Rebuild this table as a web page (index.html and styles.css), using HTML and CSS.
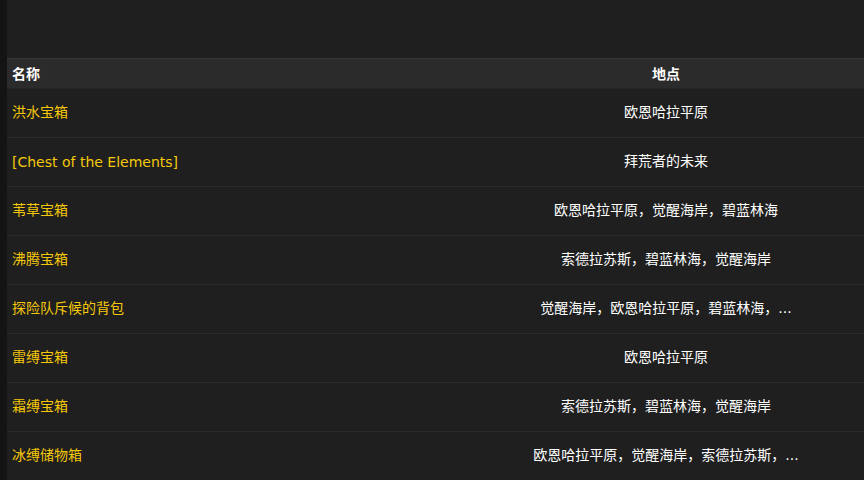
FILE: index.html
```html
<!DOCTYPE html>
<html lang="zh">
<head>
<meta charset="utf-8">
<link rel="stylesheet" href="styles.css">
</head>
<body>
<div class="page">
  <div class="rail"></div>
  <main class="main">
    <div class="top"></div>
    <table class="list">
      <thead>
        <tr><th class="name">名称</th><th class="loc">地点</th></tr>
      </thead>
      <tbody>
        <tr><td class="name">洪水宝箱</td><td class="loc">欧恩哈拉平原</td></tr>
        <tr><td class="name latin">[Chest of the Elements]</td><td class="loc">拜荒者的未来</td></tr>
        <tr><td class="name">苇草宝箱</td><td class="loc">欧恩哈拉平原，觉醒海岸，碧蓝林海</td></tr>
        <tr><td class="name">沸腾宝箱</td><td class="loc">索德拉苏斯，碧蓝林海，觉醒海岸</td></tr>
        <tr><td class="name">探险队斥候的背包</td><td class="loc">觉醒海岸，欧恩哈拉平原，碧蓝林海，...</td></tr>
        <tr><td class="name">雷缚宝箱</td><td class="loc">欧恩哈拉平原</td></tr>
        <tr><td class="name">霜缚宝箱</td><td class="loc">索德拉苏斯，碧蓝林海，觉醒海岸</td></tr>
        <tr><td class="name">冰缚储物箱</td><td class="loc">欧恩哈拉平原，觉醒海岸，索德拉苏斯，...</td></tr>
      </tbody>
    </table>
  </main>
</div>
</body>
</html>
```

FILE: styles.css
```css
html, body {
  margin: 0;
  padding: 0;
  background: #1f1f1f;
  font-family: "DejaVu Sans", "Noto Sans CJK SC", sans-serif;
  color: #fff;
}
.page {
  display: flex;
  width: 864px;
  height: 480px;
  overflow: hidden;
}
.rail {
  width: 7px;
  flex: none;
  background: #141414;
}
.main {
  flex: 1;
  display: flex;
  flex-direction: column;
}
.top {
  height: 58px;
  flex: none;
}
.list {
  width: 100%;
  border-collapse: collapse;
  font-size: 14px;
}
.list th {
  height: 28px;
  padding: 0 5px 1px;
  background: #2b2b2b;
  border-top: 1px solid #363636;
  border-bottom: 1px solid #262626;
  font-weight: bold;
  font-size: 14px;
  color: #fff;
}
.list td {
  height: 44px;
  padding: 0 5px 4px;
  border-bottom: 1px solid #2a2a2a;
}
.list td.latin {
  padding: 2px 5px 2px;
}
.list .name {
  text-align: left;
  width: 451px;
}
.list td.name {
  color: #f5c80a;
}
.list .loc {
  text-align: center;
}
```
